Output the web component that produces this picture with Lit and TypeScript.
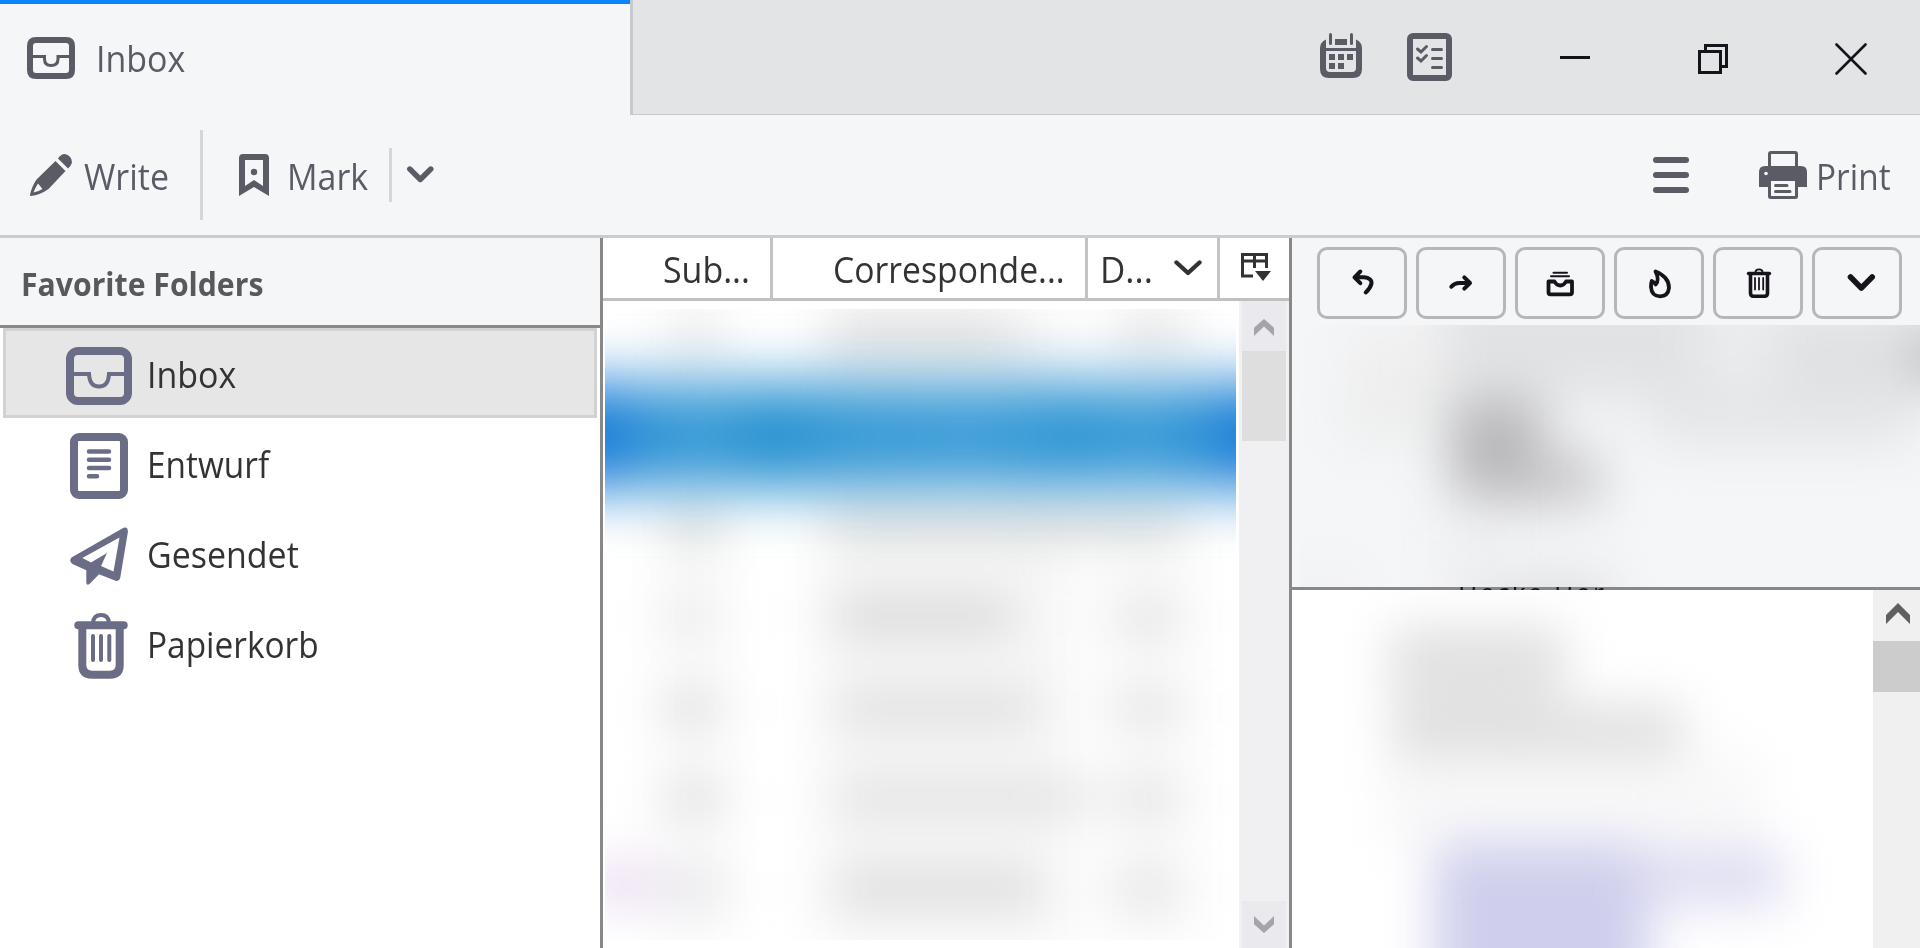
import { LitElement, html, css, svg } from "lit";
import { customElement } from "lit/decorators.js";

const icons = {
  tray: html`<svg width="48" height="42"><g fill="none" stroke="currentColor"><path stroke-width="6" d="M9 3H39Q45 3 45 9V33Q45 39 39 39H9Q3 39 3 33V9Q3 3 9 3Z"/><path stroke-width="3" d="M5 19.500H17.500V22Q17.500 28.500 24 28.500Q31 28.500 31 22V19.500H43"/></g></svg>`,
  calendar: html`<svg width="42" height="45"><g fill="currentColor"><path d="M6 6.500V15H36V6.500Q42 9 42 15V36Q42 45 33 45H9Q0 45 0 36V15Q0 9 6 6.500ZM6 18V35Q6 39 10 39H32Q36 39 36 35V18Z" fill-rule="evenodd"/><rect x="9" width="3" height="12" rx="1.500"/><rect x="30" width="3" height="12" rx="1.500"/><path d="M15 6H27V12H15ZM9 21H15V27H9ZM18 21H24V27H18ZM27 21H33V27H27ZM9 30H15V36H9ZM18 30H24V36H18Z"/></g></svg>`,
  tasks: html`<svg width="45" height="48"><g fill="none" stroke="currentColor"><rect x="3" y="3" width="39" height="42" rx="3" stroke-width="6"/><path stroke-width="3" stroke-linecap="round" d="M10.500 16L14 19L19.500 13.500M10.500 25L14 28L19.500 22.500M25.500 16.500H34.500M25.500 25.500H34.500M25.500 34.500H34.500"/></g></svg>`,
  minimise: html`<svg width="30" height="32"><path d="M0 13H30V16H0Z" fill="#15141a"/></svg>`,
  restore: html`<svg width="30" height="30"><path fill="none" stroke="#15141a" stroke-width="3" d="M1.500 7.500H22.500V28.500H1.500ZM7.500 7V1.500H28.500V22.500H23"/></svg>`,
  close: html`<svg width="32" height="32"><path fill="none" stroke="#15141a" stroke-width="2.600" stroke-linecap="round" d="M1.500 1.500L30.500 30.500M30.500 1.500L1.500 30.500"/></svg>`,
  pencil: html`<svg width="42" height="42"><g fill="currentColor"><path fill-rule="evenodd" d="M25.500 7L35.500 17L18.500 35Q10 41 1 42Q0 42 0 41Q1.500 33 6.500 25.500ZM8 29.500Q5 34 3.500 38.500Q8.500 37.500 12.500 35Z"/><path d="M28 4.500Q31 0 34.500 0Q42 1.500 42 8.500Q41 12 38 14.500Z"/></g></svg>`,
  bookmark: html`<svg width="30" height="42"><g fill="currentColor"><path fill-rule="evenodd" d="M4 0H26Q30 0 30 4V42L15 33L0 42V4Q0 0 4 0ZM6 6V32L15 26L24 32V6Z"/><circle cx="15" cy="18" r="3.200"/></g></svg>`,
  menu: html`<svg width="36" height="36"><g fill="currentColor"><rect width="36" height="6" rx="3"/><rect y="15" width="36" height="6" rx="3"/><rect y="30" width="36" height="6" rx="3"/></g></svg>`,
  printer: html`<svg width="48" height="48"><rect x="10.500" y="1.500" width="27" height="20" rx="1.500" fill="none" stroke="currentColor" stroke-width="3"/><path fill="currentColor" d="M6 15H42Q48 15 48 21V36H0V21Q0 15 6 15Z"/><circle cx="7" cy="22.500" r="1.800" fill="#f5f6f8"/><path d="M10.500 30V45.500Q10.500 46.500 12 46.500H36Q37.500 46.500 37.500 45.500V30" fill="#f5f6f8" stroke="currentColor" stroke-width="3"/><path stroke="currentColor" stroke-width="3" stroke-linecap="round" d="M16.500 34.500H28M16.500 40.500H31"/></svg>`,
  inbox: html`<svg width="66" height="58"><g fill="none" stroke="currentColor"><rect x="4" y="4" width="58" height="50" rx="8" stroke-width="8"/><path stroke-width="4" d="M8 27H23Q23.500 39.500 33 39.500Q42.500 39.500 43 27H58"/></g></svg>`,
  draft: html`<svg width="58" height="66"><g fill="none" stroke="currentColor"><rect x="4" y="4" width="50" height="58" rx="5" stroke-width="8"/><path stroke-width="4.500" stroke-linecap="round" d="M19 18.500H39M19 26.800H39M19 35H39M19 43.300H27"/></g></svg>`,
  sent: html`<svg width="58" height="58"><path fill="currentColor" fill-rule="evenodd" d="M53.500 .8Q58 -1 57.900 5L50.200 51Q49 55 45.500 53.800L29 47.200L19.500 57Q17 59 16.300 56V43.200L2.500 37Q-1.500 34 1.500 30.500ZM49.500 10.500L12.300 31L21 35.500L37 26L31 39L43.500 44.500Z"/></svg>`,
  bin: html`<svg width="54" height="66"><g fill="none" stroke="currentColor"><path stroke-width="4" d="M19 10Q19.500 2 27 2Q34.500 2 35 10"/><path stroke-width="8" stroke-linecap="round" d="M4.300 12.300H49.700"/><path stroke-width="8" d="M8.300 12V52Q8.300 61.700 18 61.700H36Q45.700 61.700 45.700 52V12"/><path stroke-width="4" stroke-linecap="round" d="M19 23V47M27 23V47M35.300 23V47"/></g></svg>`,
  chevron: html`<svg width="27" height="17"><path fill="none" stroke="currentColor" stroke-width="5.400" stroke-linecap="round" stroke-linejoin="round" d="M2.800 3L13.300 13.500L23.800 3"/></svg>`,
  sort: html`<svg width="28" height="16"><path fill="none" stroke="currentColor" stroke-width="4.400" stroke-linecap="round" stroke-linejoin="round" d="M2.500 2.500L14 13L25.500 2.500"/></svg>`,
  columns: html`<svg width="30" height="28"><path fill="none" stroke="currentColor" stroke-width="3" d="M12 23H1.500V1.500H25.500V15M1.500 8H25.500M13.500 2V15"/><path fill="currentColor" d="M14 18H30L22 28Z"/></svg>`,
  up: html`<svg width="20" height="17"><path fill="currentColor" d="M0 8.700L10 0L20 8.700V17L10 7.500L0 17Z"/></svg>`,
  down: html`<svg width="20" height="17"><path fill="currentColor" d="M0 8.300L10 17L20 8.300V0L10 9.500L0 0Z"/></svg>`,
};

const actions = [
  svg`<path stroke-width="4" d="M40.300 21.500L34.500 27.300L40.300 33.200M35 27.300H44Q52 28 51.500 33.500Q50.500 38 45.700 42.500"/>`,
  svg`<path stroke-width="4" d="M32.300 36.800Q35.500 33 40 33H51M45.300 27.300L51 33L45.300 38.700"/>`,
  svg`<path stroke-width="2" d="M35.500 22.700H49M33 26.300H51"/><path stroke-width="3.800" d="M30.500 31.500H36.500Q38.500 35.500 42.300 35.500Q46 35.500 48 31.500H54V42.500Q54 44.300 52 44.300H32.500Q30.500 44.300 30.500 42.500Z"/>`,
  svg`<path stroke-width="3.800" d="M38.500 21.500Q52.300 27 52 38Q51 46.300 43 46.300Q34.500 46 34 37Q33.800 33.500 34.800 31Q37 32 38.700 34.500Q42.800 30 38.500 21.500Z"/>`,
  svg`<path stroke-width="1.800" d="M39.500 22Q39.500 19.300 43 19.300Q46.500 19.300 46.500 22"/><path stroke-width="3.400" d="M32.500 23.500H53.500"/><path stroke-width="3.600" d="M34.500 24V43Q34.500 46.300 37.500 46.300H48.500Q51.500 46.300 51.500 43V24"/><path stroke-width="1.800" d="M39 28V39.500M43 28V39.500M47.200 28V39.500"/>`,
  svg`<path stroke-width="5.600" d="M35.500 27L46.300 38L57.200 27"/>`,
];

/* x, y, width, height, fill */
type Smudge = [number, number, number, number, string];
const g = "#e4e4e4";
const listSmudges: Smudge[] = [
  [60, 0, 60, 640, "#f9f9f9"], [215, 0, 250, 640, "#f6f6f6"], [505, 0, 80, 640, "#f9f9f9"],
  [70, -5, 42, 55, "#ececec"], [225, -5, 185, 66, "#e6e6e6"], [512, -5, 70, 55, "#eaeaea"],
  [66, 195, 46, 45, "#dedede"], [225, 190, 355, 45, "#e2e2e2"],
  [62, 290, 42, 36, g], [228, 286, 180, 42, "#dbdbdb"], [508, 290, 66, 38, g],
  [62, 380, 48, 38, "#dadada"], [230, 380, 205, 38, "#e0e0e0"], [508, 380, 66, 38, g],
  [62, 470, 52, 38, "#dcdcdc"], [230, 470, 255, 38, "#e3e3e3"], [508, 470, 66, 38, g],
  [66, 560, 50, 38, "#e2e2e5"], [230, 560, 205, 38, "#dddddd"], [508, 560, 66, 38, g],
  [-20, 550, 74, 50, "#eee0f3"],
];
const headSmudges: Smudge[] = [
  [48, 0, 100, 70, "#efefef"], [45, 60, 90, 55, "#ecedec"],
  [145, -40, 260, 115, "#e1e2e4"], [400, -40, 85, 110, "#ebecee"], [478, -20, 190, 85, "#e0e1e3"], [612, 10, 60, 50, "#bdbec0"],
  [350, 65, 265, 55, "#e4e5e7"],
  [150, 76, 94, 106, "#b8b8ba"], [225, 125, 76, 56, "#c8c8ca"],
  [155, 250, 155, 60, "#dfe0e2"], [145, 170, 60, 110, "#eeeff0"], [0, 252, 50, 40, "#eeeeee"],
];
const bodySmudges: Smudge[] = [
  [98, 38, 175, 66, "#dfdfdf"], [100, 90, 160, 40, "#e8e8e8"], [100, 116, 292, 58, "#dedede"],
  [90, 165, 380, 90, "#f8f8f9"],
  [142, 254, 216, 170, "#cfcfed"], [345, 260, 147, 56, "#dddcf1"],
];
const smudge = (s: Smudge) => svg`<rect x=${s[0]} y=${s[1]} width=${s[2]} height=${s[3]} fill=${s[4]}/>`;

@customElement("app-root")
export class AppRoot extends LitElement {
  static styles = css`
    :host { display: block; width: 1920px; height: 948px; overflow: hidden; background: #fff; color: #333; font: 36px/48px "Open Sans", "Noto Sans", sans-serif; }
    * { box-sizing: border-box; }
    svg { display: block; flex: none; }
    .lbl { display: block; flex: none; white-space: nowrap; transform: scaleX(.943); transform-origin: 0 0; }
    .page { display: flex; flex-direction: column; height: 948px; }
    .titlebar { display: flex; height: 115px; color: #5b5b66; flex: none; }
    .tab { width: 630px; background: #f5f6f8; border-top: 4px solid #0a84ff; display: flex; padding: 33px 0 0 27px; gap: 21px; }
    .tab .lbl { margin-top: -2px; }
    .caption { flex: 1; background: #e3e4e6; border-left: 3px solid #c8c9ca; border-bottom: 1px solid #c8c9ca; display: flex; padding: 33px 0 0 687px; }
    .w-task { margin-left: 45px; }
    .w-min { margin: 10px 0 0 108px; }
    .w-max { margin: 11px 0 0 108px; }
    .w-close { margin: 10px 0 0 107px; }
    .toolbar { display: flex; height: 123px; background: #f5f6f8; border-bottom: 3px solid #cacccd; color: #5b5b66; flex: none; }
    .toolbar .lbl { margin-top: 38px; }
    .pen { margin: 39px 12px 0 30px; }
    .write { width: 116px; }
    .sep { width: 3px; height: 90px; margin-top: 15px; background: #d5d6d8; }
    .sep.short { height: 54px; margin-top: 33px; }
    .mk { margin: 39px 18px 0 36px; }
    .mark { width: 102px; }
    .dd { margin: 51px 0 0 15px; }
    .burger { margin: 42px 70px 0 auto; }
    .prn { margin-top: 36px; }
    .toolbar .print { width: 104px; margin-left: 9px; transform: scaleX(.928); }
    .main { display: flex; flex: 1; min-height: 0; }
    .side { width: 603px; border-right: 3px solid #888; }
    .sidehead { height: 90px; background: #f5f6f8; border-bottom: 3px solid #888; padding: 22px 0 0 20.500px; color: #585959; font-weight: 700; font-size: 32px; }
    .row { height: 90px; margin: 0 3px; border: 3px solid transparent; display: flex; align-items: center; padding: 6px 0 0 56px; }
    .row.sel { background: #e6e6e6; border-color: #d2d2d2; }
    .ic { width: 74px; margin-right: 10.500px; color: #6b6c85; display: flex; justify-content: center; }
    .ic.bin { padding-left: 4px; }
    .row .lbl { margin-bottom: 2px; }
    .row .narrow { transform: scaleX(.928); }
    .list { width: 689px; border-right: 3px solid #888; display: flex; flex-direction: column; }
    .cols { height: 63px; border-bottom: 3px solid #c0c0c0; display: flex; flex: none; }
    .cell { border-right: 3px solid #c3c3c3; padding-top: 8px; display: flex; }
    .c1 { width: 170px; padding-left: 60px; }
    .c2 { width: 315px; padding-left: 59.500px; }
    .c2 .lbl { transform: scaleX(.936); }
    .c3 { width: 132px; padding-left: 11.500px; }
    .c3 svg { margin: 14px 0 0 18px; }
    .c3 .lbl { width: 56px; transform: scaleX(.97); }
    .pick { padding: 15px 0 0 21px; }
    .body { display: flex; flex: 1; min-height: 0; }
    .blurred { width: 636px; padding: 8px 0 0 2px; }
    .bar { width: 50px; padding: 0 3px; background: #f0f0f3; display: flex; flex-direction: column; color: #a5a5a9; }
    .btn { height: 50px; background: #eaeaee; display: flex; justify-content: center; padding-top: 18px; }
    .btn.end { height: 47px; padding-top: 15px; margin-top: auto; }
    .thumb { height: 90px; background: #dedede; }
    .msg { width: 628px; display: flex; flex-direction: column; background: #f5f6f8; }
    .acts { height: 87px; padding: 9px 0 0 25px; display: flex; gap: 9px; flex: none; }
    .act { width: 90px; height: 72px; border: 3px solid #b7b7b7; border-radius: 10px; }
    .hdr { height: 262px; flex: none; padding-left: 8px; }
    .line { height: 3px; flex: none; background: #888; overflow: hidden; padding-left: 166px; color: #15141a; font-size: 28px; line-height: 28px; letter-spacing: 2.400px; }
    .line .lbl { margin-top: -9px; }
    .view { flex: 1; display: flex; background: #fff; min-height: 0; }
    .vbar { width: 47px; background: #f0f0f0; color: #606060; }
    .vup { height: 51px; padding: 13px 0 0 13px; }
    .vthumb { height: 51px; background: #ccc; }
  `;
  render() {
    const folders: [string, unknown, string, string][] = [
      ["Inbox", icons.inbox, "", ""], ["Entwurf", icons.draft, "", "narrow"],
      ["Gesendet", icons.sent, "", ""], ["Papierkorb", icons.bin, "bin", "narrow"],
    ];
    return html`<div class="page">
      <div class="titlebar">
        <div class="tab">${icons.tray}<span class="lbl">Inbox</span></div>
        <div class="caption">
          ${icons.calendar}<span class="w-task">${icons.tasks}</span><span class="w-min">${icons.minimise}</span>
          <span class="w-max">${icons.restore}</span><span class="w-close">${icons.close}</span>
        </div>
      </div>
      <div class="toolbar">
        <span class="pen">${icons.pencil}</span><span class="lbl write">Write</span><i class="sep"></i>
        <span class="mk">${icons.bookmark}</span><span class="lbl mark">Mark</span><i class="sep short"></i>
        <span class="dd">${icons.chevron}</span>
        <span class="burger">${icons.menu}</span><span class="prn">${icons.printer}</span><span class="lbl print">Print</span>
      </div>
      <div class="main">
        <div class="side">
          <div class="sidehead"><span class="lbl">Favorite Folders</span></div>
          ${folders.map(([n, ic, c, w], i) => html`<div class="row ${i ? "" : "sel"}"><span class="ic ${c}">${ic}</span><span class="lbl ${w}">${n}</span></div>`)}
        </div>
        <div class="list">
          <div class="cols">
            <div class="cell c1"><span class="lbl">Sub...</span></div>
            <div class="cell c2"><span class="lbl">Corresponde...</span></div>
            <div class="cell c3"><span class="lbl">D...</span>${icons.sort}</div>
            <div class="pick">${icons.columns}</div>
          </div>
          <div class="body">
            <div class="blurred">
              <svg width="631" height="631">
                <defs>
                  <filter id="b" filterUnits="userSpaceOnUse" x="-120" y="-120" width="900" height="900" color-interpolation-filters="sRGB"><feGaussianBlur stdDeviation="26 23"/></filter>
                  <filter id="s" filterUnits="userSpaceOnUse" x="-120" y="-120" width="900" height="900" color-interpolation-filters="sRGB"><feGaussianBlur stdDeviation="14 29"/></filter>
                  <linearGradient id="sel" gradientUnits="userSpaceOnUse" x1="0" y1="0" x2="631" y2="0">
                    <stop offset="0" stop-color="#1c7fd8"/><stop offset=".07" stop-color="#3093d6"/><stop offset=".15" stop-color="#389ad6"/>
                    <stop offset=".27" stop-color="#2892d1"/><stop offset=".4" stop-color="#389ad6"/><stop offset=".58" stop-color="#3d9dd8"/>
                    <stop offset=".74" stop-color="#3096d4"/><stop offset=".86" stop-color="#3a9bd7"/><stop offset=".95" stop-color="#2b8fd6"/><stop offset="1" stop-color="#1c7fd8"/>
                  </linearGradient>
                </defs>
                <g filter="url(#b)">${listSmudges.map(smudge)}</g>
                <g filter="url(#s)"><rect x="-110" y="74" width="860" height="106" fill="url(#sel)"/></g>
              </svg>
            </div>
            <div class="bar"><div class="btn">${icons.up}</div><div class="thumb"></div><div class="btn end">${icons.down}</div></div>
          </div>
        </div>
        <div class="msg">
          <div class="acts">
            ${actions.map((a) => html`<div class="act"><svg width="84" height="66"><g fill="none" stroke="#15141a" stroke-linecap="round" stroke-linejoin="round">${a}</g></svg></div>`)}
          </div>
          <div class="hdr"><svg width="620" height="262">
            <defs><filter id="h" filterUnits="userSpaceOnUse" x="-100" y="-100" width="840" height="500" color-interpolation-filters="sRGB"><feGaussianBlur stdDeviation="25"/></filter></defs>
            <g filter="url(#h)">${headSmudges.map(smudge)}</g></svg></div>
          <div class="line"><span class="lbl">Hecke Her</span></div>
          <div class="view">
            <svg width="581" height="358">
              <defs><filter id="v" filterUnits="userSpaceOnUse" x="-100" y="-100" width="800" height="600" color-interpolation-filters="sRGB"><feGaussianBlur stdDeviation="25"/></filter></defs>
              <g filter="url(#v)">${bodySmudges.map(smudge)}</g></svg>
            <div class="vbar"><div class="vup"><svg width="24" height="21"><path fill="currentColor" d="M0 12L12 0L24 12V21L12 9L0 21Z"/></svg></div><div class="vthumb"></div></div>
          </div>
        </div>
      </div>
    </div>`;
  }
}
